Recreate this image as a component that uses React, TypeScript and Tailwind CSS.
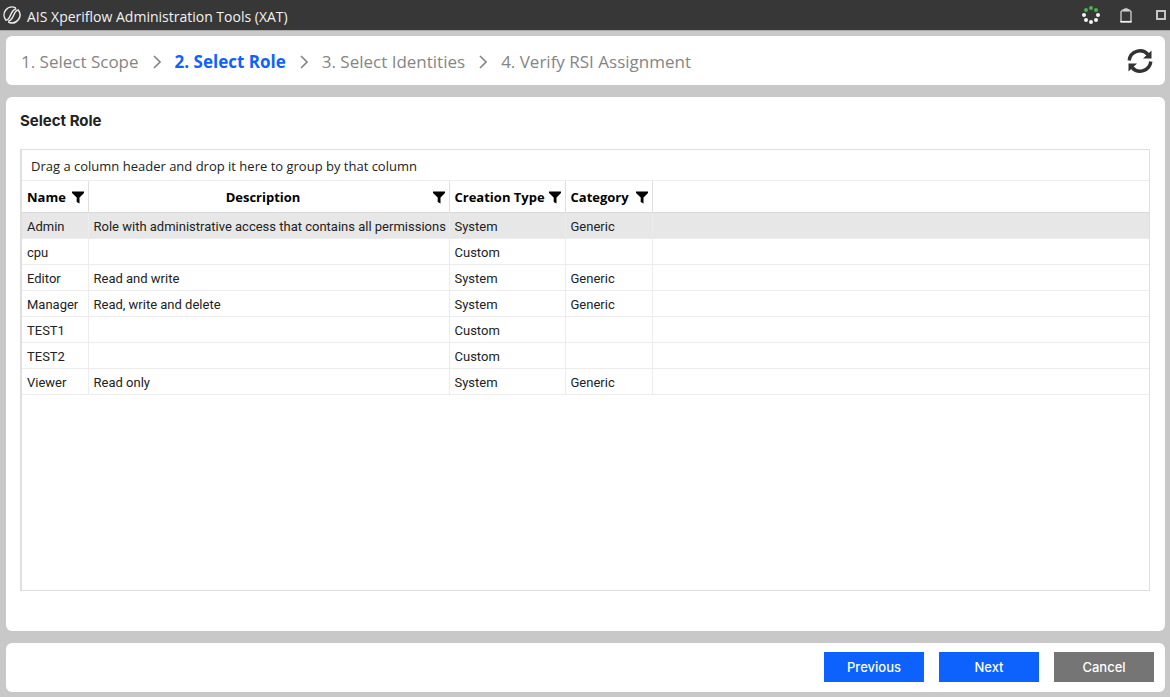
import { Fragment, useState } from "react"

interface Role {
  name: string
  description: string
  creationType: string
  category: string
}

const steps = ["1. Select Scope", "2. Select Role", "3. Select Identities", "4. Verify RSI Assignment"]

const roles: Role[] = [
  { name: "Admin", description: "Role with administrative access that contains all permissions", creationType: "System", category: "Generic" },
  { name: "cpu", description: "", creationType: "Custom", category: "" },
  { name: "Editor", description: "Read and write", creationType: "System", category: "Generic" },
  { name: "Manager", description: "Read, write and delete", creationType: "System", category: "Generic" },
  { name: "TEST1", description: "", creationType: "Custom", category: "" },
  { name: "TEST2", description: "", creationType: "Custom", category: "" },
  { name: "Viewer", description: "Read only", creationType: "System", category: "Generic" },
]

const columns = ["Name", "Description", "Creation Type", "Category"]

function LogoIcon() {
  return (
    <svg width="18" height="18" viewBox="0 0 18 18" fill="none" stroke="#e8e8e8" strokeWidth="1.5" strokeLinecap="round">
      <path d="M12.2 1.6A8 8 0 0 0 3 14.2C8 14 6.800 4.200 12.800 3" />
      <path d="M5.800 16.300A8 8 0 0 0 15.200 4C10.400 4.200 11.200 13.800 5.800 15" />
    </svg>
  )
}

function SpinnerIcon() {
  return (
    <svg width="18" height="18" viewBox="0 0 18 18" fill="#f2f2f2">
      <circle cx="9" cy="2" r="2" fill="#4caf50" />
      <circle cx="14" cy="4" r="2" fill="#4caf50" />
      <circle cx="4" cy="4" r="2" fill="#4caf50" />
      <circle cx="16" cy="9" r="2" />
      <circle cx="14" cy="14" r="2" />
      <circle cx="9" cy="16" r="2" />
      <circle cx="4" cy="14" r="2" />
      <circle cx="2" cy="9" r="2" />
    </svg>
  )
}

function ClipboardIcon() {
  return (
    <svg width="12" height="16" viewBox="0 0 12 16" fill="none" stroke="#cfcfcf">
      <path d="M1 15V4.500L3 2.800h6l2 1.700V15" strokeWidth="1.300" />
      <path d="M.4 14.800h11.200" stroke="#f0f0f0" strokeWidth="1.800" />
      <path d="M2.500 4.200 4 2l1-.2a1.100 1.100 0 0 1 2 0L8 2l1.500 2.200Z" fill="#cfcfcf" strokeWidth=".6" />
    </svg>
  )
}

function RefreshIcon() {
  return (
    <svg width="26" height="26" viewBox="0 0 26 26" fill="none" stroke="#333" strokeWidth="3.400">
      <path d="M2.200 12.500A10.800 10.800 0 0 1 21 6.500" />
      <path d="M23.800 13.500A10.800 10.800 0 0 1 5 19.500" />
      <path d="M24.500 2.500v8h-8.500Z" fill="#333" stroke="none" />
      <path d="M1.500 23.500v-8H10Z" fill="#333" stroke="none" />
    </svg>
  )
}

function FilterIcon() {
  return (
    <svg width="12" height="13" viewBox="0 0 12 13" fill="#000">
      <path d="M0 .5h12v1.500L7.500 6.500v6L4.700 11V6.500L0 2Z" />
    </svg>
  )
}

function ChevronIcon() {
  return (
    <svg width="8" height="14" viewBox="0 0 8 14" fill="none" stroke="#858585" strokeWidth="1.600">
      <path d="m1 1 6 6-6 6" />
    </svg>
  )
}

export default function App() {
  const [selected, setSelected] = useState("Admin")

  return (
    <div className="flex min-h-screen flex-col bg-[#c8c8c8] font-['Open_Sans','Noto_Sans',sans-serif] text-[#222]">
      {/* Title bar */}
      <header className="flex h-[30px] shrink-0 items-center bg-[#373737] pl-[3px] text-[#f2f2f2]">
        <LogoIcon />
        <h1 className="ml-1.5 pt-1 text-[14px] leading-5">AIS Xperiflow Administration Tools (XAT)</h1>
        <div className="ml-auto flex items-center pr-1">
          <SpinnerIcon />
          <button type="button" aria-label="Clipboard" className="ml-5">
            <ClipboardIcon />
          </button>
          <button type="button" aria-label="Maximize" className="ml-6 h-2.5 w-2.5 border-2 border-[#c4c4c4]" />
        </div>
      </header>

      <div className="flex flex-1 flex-col gap-3 border-t border-[#aaa] pt-[5px] pr-[5px] pb-[5px] pl-1.5">
        {/* Wizard steps */}
        <nav className="flex h-[49px] shrink-0 items-center rounded-md bg-white pr-3 pl-[15px]">
          <div className="flex items-center gap-3.5 pt-0.5 text-[17px] leading-6 text-[#858585]">
            {steps.map((step, i) => (
              <Fragment key={step}>
                {i > 0 && <ChevronIcon />}
                <span className={i === 1 ? "font-bold text-[#0d62fe]" : ""}>{step}</span>
              </Fragment>
            ))}
          </div>
          <button type="button" aria-label="Refresh" className="ml-auto">
            <RefreshIcon />
          </button>
        </nav>

        {/* Role grid */}
        <main className="flex flex-1 flex-col rounded-md bg-white pt-3.5 pr-[15px] pb-10 pl-3.5">
          <h2 className="font-['Inter',sans-serif] text-[15px] leading-5 font-bold">Select Role</h2>
          <div className="mt-[18px] flex-1 border border-l-2 border-[#dfdfdf] text-[13px] leading-5">
            <p className="h-[31px] border-b border-[#ededed] pt-1.5 pl-[9px]">
              Drag a column header and drop it here to group by that column
            </p>
            <table className="w-full table-fixed border-collapse">
              <colgroup>
                <col className="w-[66px]" />
                <col className="w-[361px]" />
                <col className="w-[116px]" />
                <col className="w-[87px]" />
                <col />
              </colgroup>
              <thead>
                <tr className="h-[31px] border-b border-[#dadada] text-black">
                  {columns.map((column) => (
                    <th key={column} className="border-r border-[#dedede] pt-0.5 pr-1 pl-[5px] font-bold">
                      <div className="flex items-center justify-between whitespace-nowrap">
                        <span className={column === "Description" ? "flex-1 text-center" : ""}>{column}</span>
                        <button type="button" aria-label={`Filter ${column}`}>
                          <FilterIcon />
                        </button>
                      </div>
                    </th>
                  ))}
                  <td />
                </tr>
              </thead>
              <tbody className="font-['Roboto','Open_Sans',sans-serif]">
                {roles.map((role) => (
                  <tr
                    key={role.name}
                    onClick={() => setSelected(role.name)}
                    className={`h-[26px] border-b border-[#ececec] whitespace-nowrap ${role.name === selected ? "bg-[#e7e7e7]" : ""}`}
                  >
                    <td className="border-r border-[#ececec] pt-1 pl-[5px]">{role.name}</td>
                    <td className="border-r border-[#ececec] pt-1 pl-[5px]">{role.description}</td>
                    <td className="border-r border-[#ececec] pt-1 pl-[5px]">{role.creationType}</td>
                    <td className="border-r border-[#ececec] pt-1 pl-[5px]">{role.category}</td>
                    <td />
                  </tr>
                ))}
              </tbody>
            </table>
          </div>
        </main>

        {/* Actions */}
        <footer className="flex h-[49px] shrink-0 items-start justify-end gap-[15px] rounded-md bg-white pt-[9px] pr-[11px] font-['Inter',sans-serif] text-[13px] leading-5 font-medium text-white">
          <button type="button" className="h-[30px] w-[100px] bg-[#0d62fe]">Previous</button>
          <button type="button" className="h-[30px] w-[100px] bg-[#0d62fe]">Next</button>
          <button type="button" className="h-[30px] w-[100px] bg-[#757575]">Cancel</button>
        </footer>
      </div>
    </div>
  )
}
